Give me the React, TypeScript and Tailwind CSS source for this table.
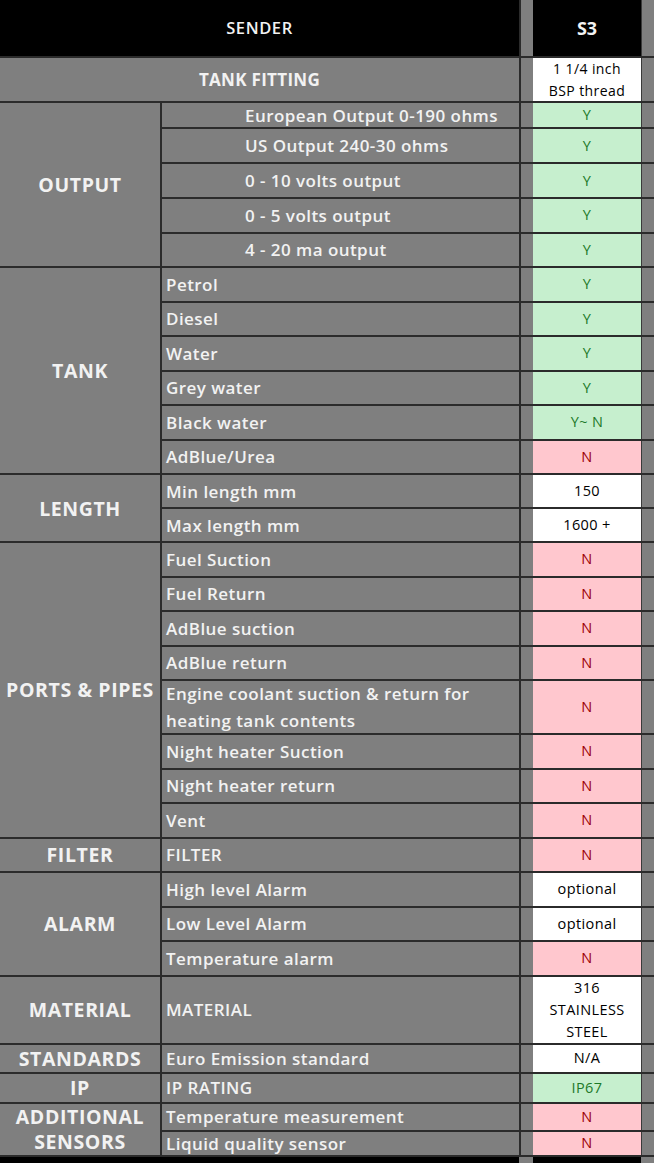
import React from 'react';

type Tone = 'green' | 'red' | 'white';

type Row = {
  label: string;
  value: React.ReactNode;
  tone: Tone;
  h: string;
  indent?: boolean;
};

type Group = {
  name: React.ReactNode;
  rows: Row[];
};

const R = 'h-[34.5px]';

const groups: Group[] = [
  {
    name: 'OUTPUT',
    rows: [
      { label: 'European Output 0-190 ohms', value: 'Y', tone: 'green', h: 'h-[26px]', indent: true },
      { label: 'US Output 240-30 ohms', value: 'Y', tone: 'green', h: 'h-[35px]', indent: true },
      { label: '0 - 10 volts output', value: 'Y', tone: 'green', h: 'h-[35px]', indent: true },
      { label: '0 - 5 volts output', value: 'Y', tone: 'green', h: 'h-[34.5px]', indent: true },
      { label: '4 - 20 ma output', value: 'Y', tone: 'green', h: 'h-[34.5px]', indent: true },
    ],
  },
  {
    name: 'TANK',
    rows: [
      { label: 'Petrol', value: 'Y', tone: 'green', h: R },
      { label: 'Diesel', value: 'Y', tone: 'green', h: R },
      { label: 'Water', value: 'Y', tone: 'green', h: R },
      { label: 'Grey water', value: 'Y', tone: 'green', h: R },
      { label: 'Black water', value: 'Y~ N', tone: 'green', h: R },
      { label: 'AdBlue/Urea', value: 'N', tone: 'red', h: R },
    ],
  },
  {
    name: 'LENGTH',
    rows: [
      { label: 'Min length mm', value: '150', tone: 'white', h: 'h-[34px]' },
      { label: 'Max length mm', value: '1600 +', tone: 'white', h: 'h-[34px]' },
    ],
  },
  {
    name: 'PORTS & PIPES',
    rows: [
      { label: 'Fuel Suction', value: 'N', tone: 'red', h: R },
      { label: 'Fuel Return', value: 'N', tone: 'red', h: R },
      { label: 'AdBlue suction', value: 'N', tone: 'red', h: R },
      { label: 'AdBlue return', value: 'N', tone: 'red', h: R },
      { label: 'Engine coolant suction & return for heating tank contents', value: 'N', tone: 'red', h: 'h-[54px]' },
      { label: 'Night heater Suction', value: 'N', tone: 'red', h: R },
      { label: 'Night heater return', value: 'N', tone: 'red', h: R },
      { label: 'Vent', value: 'N', tone: 'red', h: R },
    ],
  },
  {
    name: 'FILTER',
    rows: [{ label: 'FILTER', value: 'N', tone: 'red', h: R }],
  },
  {
    name: 'ALARM',
    rows: [
      { label: 'High level Alarm', value: 'optional', tone: 'white', h: R },
      { label: 'Low Level Alarm', value: 'optional', tone: 'white', h: R },
      { label: 'Temperature alarm', value: 'N', tone: 'red', h: R },
    ],
  },
  {
    name: 'MATERIAL',
    rows: [
      {
        label: 'MATERIAL',
        value: (
          <>
            316
            <br />
            STAINLESS
            <br />
            STEEL
          </>
        ),
        tone: 'white',
        h: 'h-[68px]',
      },
    ],
  },
  {
    name: 'STANDARDS',
    rows: [{ label: 'Euro Emission standard', value: 'N/A', tone: 'white', h: 'h-[29px]' }],
  },
  {
    name: 'IP',
    rows: [{ label: 'IP RATING', value: 'IP67', tone: 'green', h: 'h-[30px]' }],
  },
  {
    name: (
      <>
        ADDITIONAL
        <br />
        SENSORS
      </>
    ),
    rows: [
      { label: 'Temperature measurement', value: 'N', tone: 'red', h: 'h-[28px]' },
      { label: 'Liquid quality sensor', value: 'N', tone: 'red', h: 'h-[25px]' },
    ],
  },
];

const toneClass: Record<Tone, string> = {
  green: 'bg-[#c6efce] text-[#1e7a2a]',
  red: 'bg-[#ffc7ce] text-[#9c0006]',
  white: 'bg-white text-black',
};

// gap column, value cell and the grey strip at the right edge
const Tail = ({ children, cls }: { children: React.ReactNode; cls: string }) => (
  <>
    <div className="w-[14px] shrink-0 border-l-2 border-[#2b2b2b] bg-[#7f7f7f]" />
    <div
      className={`w-[108px] shrink-0 flex items-center justify-center text-center text-[14.5px] tracking-[0.4px] leading-[22px] ${cls}`}
    >
      {children}
    </div>
    <div className="flex-1 border-l border-[#3a3a3a] bg-[#7f7f7f]" />
  </>
);

export default function App() {
  return (
    <div
      className="w-[654px] h-[1163px] overflow-hidden bg-[#7f7f7f] text-[#f2f2f2]"
      style={{ fontFamily: '"Open Sans", Lato, sans-serif' }}
    >
      {/* header */}
      <div className="flex h-[58px] border-b-2 border-[#2b2b2b]">
        <div className="w-[519px] shrink-0 bg-black flex items-center justify-center text-[16.5px] tracking-[0.6px] font-semibold">
          SENDER
        </div>
        <div className="w-[14px] shrink-0 border-l-2 border-[#2b2b2b] bg-[#7f7f7f]" />
        <div className="w-[108px] shrink-0 bg-black flex items-center justify-center text-[18px] font-bold">
          S3
        </div>
        <div className="flex-1 border-l border-[#3a3a3a] bg-[#7f7f7f]" />
      </div>

      {/* tank fitting */}
      <div className="flex h-[45px] border-b-2 border-[#2b2b2b]">
        <div className="w-[519px] shrink-0 flex items-center justify-center text-[17px] tracking-[0.3px] font-bold">
          TANK FITTING
        </div>
        <Tail cls="bg-white text-black text-[14px] leading-[20px]">
          1 1/4 inch
          <br />
          BSP thread
        </Tail>
      </div>

      {groups.map((g, gi) => (
        <div key={gi} className="flex">
          <div className="w-[162px] shrink-0 border-r-2 border-b-2 border-[#2b2b2b] flex items-center justify-center text-center text-[19.5px] tracking-[0.6px] leading-[25px] font-bold">
            {g.name}
          </div>
          <div className="flex-1 flex flex-col">
            {g.rows.map((r, ri) => (
              <div key={ri} className={`flex border-b-2 border-[#2b2b2b] ${r.h}`}>
                <div
                  className={`w-[357px] shrink-0 flex items-center text-[17px] tracking-[0.45px] leading-[27px] font-semibold ${
                    r.indent ? 'pl-[83px]' : 'pl-[4px] pr-6'
                  }`}
                >
                  {r.label}
                </div>
                <Tail cls={toneClass[r.tone]}>{r.value}</Tail>
              </div>
            ))}
          </div>
        </div>
      ))}

      <div className="flex h-[8px]">
        <div className="w-[519px] bg-black" />
        <div className="w-[14px] bg-[#7f7f7f]" />
        <div className="w-[108px] bg-black" />
        <div className="flex-1 bg-[#7f7f7f]" />
      </div>
    </div>
  );
}
